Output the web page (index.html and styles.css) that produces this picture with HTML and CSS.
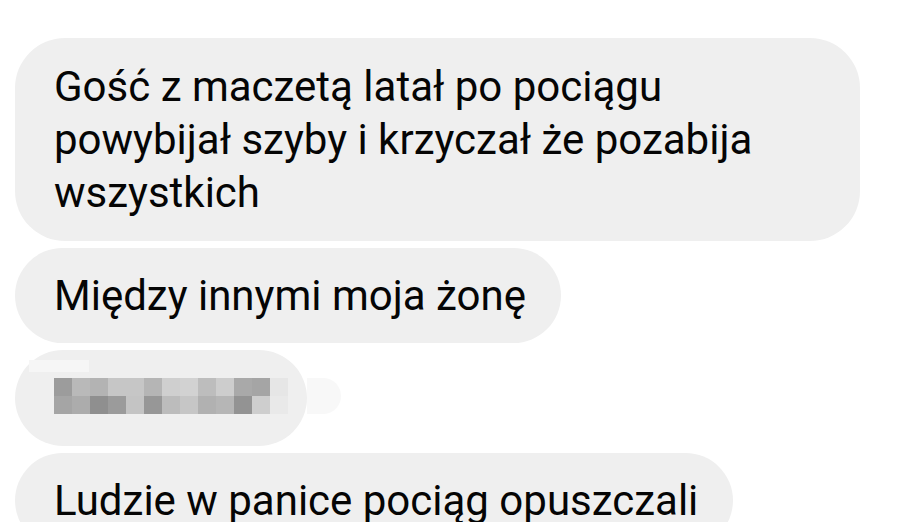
FILE: index.html
```html
<!doctype html>
<html lang="pl">

<head>
  <meta charset="utf-8" />
  <meta name="viewport" content="width=device-width, initial-scale=1.0" />
  <link rel="stylesheet" href="styles.css">
</head>

<body>
  <div class="thread">
    <div class="bubble bubble-wide">Gość z maczetą latał po pociągu powybijał szyby i krzyczał że pozabija wszystkich</div>
    <div class="bubble">Między innymi moja żonę</div>
    <div class="bubble bubble-hidden">
      <div class="pixels" id="pixels"></div>
    </div>
    <div class="bubble">Ludzie w panice pociąg opuszczali</div>
  </div>

  <script>
    // censored name, pixelated
    const rows = [
      ['#9c9c9c', '#b9b9b9', '#b3b3b3', '#c6c6c6', '#c6c6c6', '#b5b5b5', '#cfcfcf', '#d2d2d2', '#bdbdbd', '#cdcdcd', '#a9a9a9', '#a5a5a5', '#e6e6e6'],
      ['#a5a5a5', '#acacac', '#8f8f8f', '#9b9b9b', '#c4c4c4', '#979797', '#bcbcbc', '#c6c6c6', '#b1b1b1', '#b6b6b6', '#939393', '#cecece', '#e9e9e9']
    ];
    const pixels = document.getElementById('pixels');
    rows.forEach(row => {
      row.forEach(color => {
        const cell = document.createElement('span');
        cell.className = 'pixel';
        cell.style.background = color;
        pixels.appendChild(cell);
      });
    });
  </script>
</body>

</html>
```

FILE: styles.css
```css
:root {
  --bubble: #efefef;
  --text: #050505;
}

body {
  margin: 0;
  background: #fff;
  font-family: Roboto, 'Noto Sans', sans-serif;
  overflow: hidden;
}

.thread {
  display: flex;
  flex-direction: column;
  align-items: flex-start;
  gap: 7px;
  padding: 38px 0 0 15px;
}

.bubble {
  background: var(--bubble);
  color: var(--text);
  font-size: 42px;
  line-height: 53px;
  padding: 21px 35px 21px 39px;
  border-radius: 48px;
  max-width: 768px;
  position: relative;
}

.bubble-wide {
  width: 768px;
  padding: 22px 38px 22px 39px;
  border-radius: 50px;
}

.bubble-hidden {
  padding: 28px 19px 32px 39px;
}

.bubble-hidden::after {
  content: '';
  position: absolute;
  left: 292px;
  top: 28px;
  width: 34px;
  height: 36px;
  background: #f8f8f8;
  border-radius: 0 18px 18px 0;
}

.bubble-hidden::before {
  content: '';
  position: absolute;
  left: 14px;
  top: 10px;
  width: 60px;
  height: 12px;
  background: #f6f6f6;
}

.pixels {
  display: grid;
  grid-template-columns: repeat(13, 18px);
  grid-auto-rows: 18px;
}

.pixel {
  display: block;
}
```
